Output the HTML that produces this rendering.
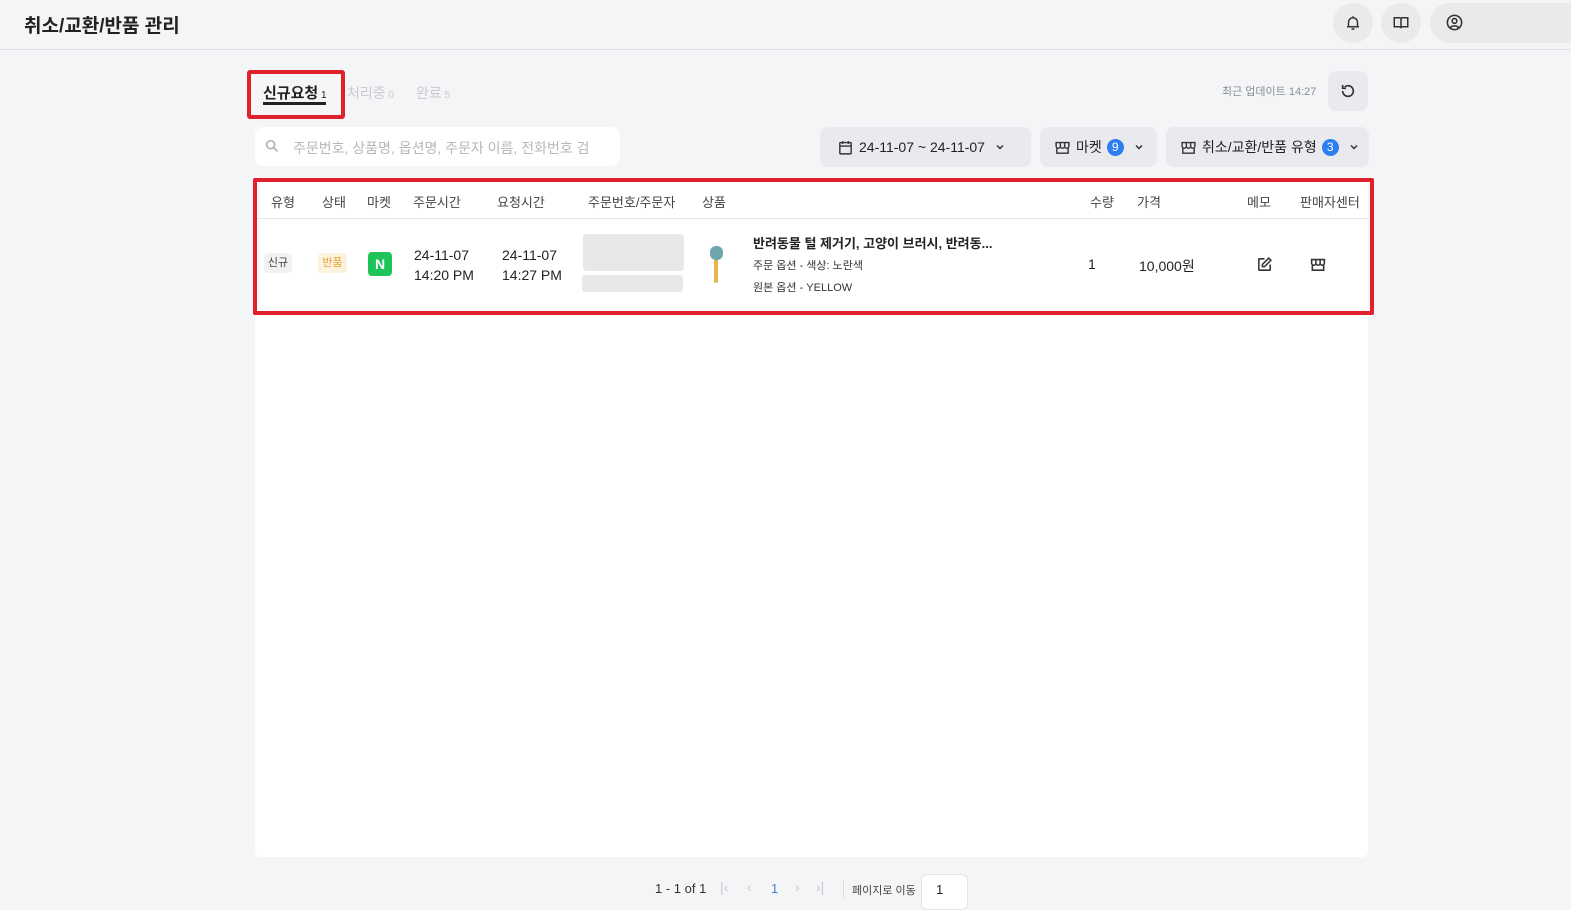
<!DOCTYPE html>
<html><head><meta charset="utf-8"><style>
*{box-sizing:border-box;margin:0;padding:0}
body{width:1571px;height:906px;background:#f4f5f7;font-family:"Liberation Sans","Noto Sans CJK KR",sans-serif;color:#222;position:relative;overflow:hidden}
.a{position:absolute}
.hdr{left:0;top:0;width:1571px;height:50px;border-bottom:1px solid #dfe1e5;background:#f4f5f7}
.circ{width:40px;height:40px;border-radius:20px;background:#e9eaec;display:flex;align-items:center;justify-content:center}
.btn{background:#e9eaed;border-radius:8px;height:40px;display:flex;align-items:center;font-size:14px;color:#222;gap:5px;padding:0 14px;white-space:nowrap}
.btn svg,.btn span{flex-shrink:0}
.badge{width:17px;height:17px;border-radius:9px;background:#2d7ff0;color:#fff;font-size:12px;display:inline-flex;align-items:center;justify-content:center}
.th{top:192px;font-size:13px;color:#444}
.td{font-size:14px;color:#222}
</style></head><body>
<div class="a hdr"></div>
<div class="a" style="left:24px;top:11px;font-size:19px;font-weight:bold;color:#222">취소/교환/반품 관리</div>
<div class="a circ" style="left:1333px;top:3px"><svg width="18" height="18" viewBox="0 0 24 24" fill="none" stroke="#333" stroke-width="2"><path d="M6 17V11a6 6 0 0 1 12 0v6H6zM4 17h16M10 20h4M12 3v2"/></svg></div>
<div class="a circ" style="left:1381px;top:3px"><svg width="20" height="18" viewBox="0 0 24 24" fill="none" stroke="#333" stroke-width="2"><path d="M3 5h7a2 2 0 0 1 2 2v12a2 2 0 0 0-2-2H3zM21 5h-7a2 2 0 0 0-2 2v12a2 2 0 0 1 2-2h7z"/></svg></div>
<div class="a" style="left:1430px;top:3px;width:160px;height:40px;border-radius:20px;background:#e9eaec"></div>
<svg class="a" style="left:1445px;top:13px" width="19" height="19" viewBox="0 0 24 24" fill="none" stroke="#333" stroke-width="2"><circle cx="12" cy="12" r="9"/><circle cx="12" cy="10" r="3"/><path d="M6.5 18.5c3-3 8-3 11 0"/></svg>

<div class="a" style="left:247px;top:70px;width:98px;height:49px;border:4px solid #e0202a;border-radius:3px"></div>
<div class="a" style="left:263px;top:82px;font-size:15px;font-weight:bold;color:#222">신규요청<span style="font-size:10px;font-weight:normal"> 1</span></div>
<div class="a" style="left:263px;top:102px;width:63px;height:3px;background:#222"></div>
<div class="a" style="left:347px;top:83px;font-size:14px;color:#c8cacd">처리중<span style="font-size:10px"> 0</span></div>
<div class="a" style="left:416px;top:83px;font-size:14px;color:#c8cacd">완료<span style="font-size:10px"> 5</span></div>
<div class="a" style="left:1222px;top:83px;font-size:11px;color:#8a8d92">최근 업데이트 14:27</div>
<div class="a" style="left:1328px;top:71px;width:40px;height:40px;border-radius:8px;background:#e9eaed;display:flex;align-items:center;justify-content:center"><svg width="16" height="16" viewBox="0 0 24 24" fill="none" stroke="#333" stroke-width="2.5"><path d="M4 12a8 8 0 1 0 3-6.2M4 3v5h5"/></svg></div>

<div class="a" style="left:255px;top:127px;width:365px;height:39px;background:#fff;border-radius:8px"></div>
<svg class="a" style="left:264px;top:138px" width="16" height="16" viewBox="0 0 24 24" fill="none" stroke="#b0b2b6" stroke-width="2.5"><circle cx="10" cy="10" r="6"/><path d="M15 15l5 5"/></svg>
<div class="a" style="left:293px;top:138px;font-size:14px;color:#b5b7bb;width:310px;overflow:hidden;white-space:nowrap">주문번호, 상품명, 옵션명, 주문자 이름, 전화번호 검</div>

<div class="a btn" style="left:820px;top:127px;width:211px;padding-left:17px"><svg width="17" height="17" viewBox="0 0 24 24" fill="none" stroke="#333" stroke-width="2"><rect x="4" y="5" width="16" height="16" rx="1"/><path d="M4 10h16M8 3v4M16 3v4"/></svg>24-11-07 ~ 24-11-07 <svg width="12" height="12" viewBox="0 0 24 24" fill="none" stroke="#333" stroke-width="3" style="margin-left:4px"><path d="M6 9l6 6 6-6"/></svg></div>
<div class="a btn" style="left:1040px;top:127px;width:117px"><svg width="17" height="17" viewBox="0 0 24 24" fill="none" stroke="#333" stroke-width="2"><path d="M3 5h18v5a3 3 0 0 1-6 0 3 3 0 0 1-6 0 3 3 0 0 1-6 0zM4 12v8h16v-8M9 5v5M15 5v5"/></svg><span>마켓</span><span class="badge">9</span><svg width="12" height="12" viewBox="0 0 24 24" fill="none" stroke="#333" stroke-width="3" style="margin-left:4px"><path d="M6 9l6 6 6-6"/></svg></div>
<div class="a btn" style="left:1166px;top:127px;width:203px"><svg width="17" height="17" viewBox="0 0 24 24" fill="none" stroke="#333" stroke-width="2"><path d="M3 5h18v5a3 3 0 0 1-6 0 3 3 0 0 1-6 0 3 3 0 0 1-6 0zM4 12v8h16v-8M9 5v5M15 5v5"/></svg><span>취소/교환/반품 유형</span><span class="badge">3</span><svg width="12" height="12" viewBox="0 0 24 24" fill="none" stroke="#333" stroke-width="3" style="margin-left:4px"><path d="M6 9l6 6 6-6"/></svg></div>

<div class="a" style="left:255px;top:180px;width:1113px;height:677px;background:#fff;border-radius:6px"></div>
<div class="a" style="left:255px;top:218px;width:1113px;height:1px;background:#e3e5e8"></div>
<div class="a" style="left:253px;top:178px;width:1121px;height:137px;border:4px solid #e0202a;border-radius:2px"></div>

<div class="a th" style="left:271px">유형</div>
<div class="a th" style="left:322px">상태</div>
<div class="a th" style="left:367px">마켓</div>
<div class="a th" style="left:413px">주문시간</div>
<div class="a th" style="left:497px">요청시간</div>
<div class="a th" style="left:588px">주문번호/주문자</div>
<div class="a th" style="left:702px">상품</div>
<div class="a th" style="left:1090px">수량</div>
<div class="a th" style="left:1137px">가격</div>
<div class="a th" style="left:1247px">메모</div>
<div class="a th" style="left:1300px">판매자센터</div>

<div class="a" style="left:264px;top:253px;width:28px;height:20px;background:#f1f2f4;border-radius:4px;font-size:11px;color:#444;text-align:center;line-height:20px">신규</div>
<div class="a" style="left:318px;top:253px;width:29px;height:20px;background:#fdf2dc;border-radius:4px;font-size:11px;color:#e8a23a;text-align:center;line-height:20px">반품</div>
<div class="a" style="left:368px;top:252px;width:24px;height:24px;background:#1ec35a;border-radius:4px;color:#fff;font-weight:bold;font-size:14px;text-align:center;line-height:24px">N</div>
<div class="a td" style="left:414px;top:245px;line-height:20px">24-11-07<br>14:20 PM</div>
<div class="a td" style="left:502px;top:245px;line-height:20px">24-11-07<br>14:27 PM</div>
<div class="a" style="left:583px;top:234px;width:101px;height:37px;background:#e8e8e8;border-radius:3px"></div>
<div class="a" style="left:582px;top:275px;width:101px;height:17px;background:#e8e8e8;border-radius:3px"></div>
<div class="a" style="left:714px;top:256px;width:4px;height:27px;background:#e9b44c;border-radius:2px"></div>
<div class="a" style="left:710px;top:246px;width:13px;height:14px;background:#6fa5ad;border-radius:6px"></div>
<div class="a" style="left:753px;top:233px;font-size:13px;font-weight:bold;color:#222">반려동물 털 제거기, 고양이 브러시, 반려동...</div>
<div class="a" style="left:753px;top:257px;font-size:11px;color:#333">주문 옵션 - 색상: 노란색</div>
<div class="a" style="left:753px;top:279px;font-size:11px;color:#333">원본 옵션 - YELLOW</div>
<div class="a td" style="left:1088px;top:256px">1</div>
<div class="a td" style="left:1139px;top:256px">10,000원</div>
<svg class="a" style="left:1256px;top:256px" width="17" height="17" viewBox="0 0 24 24" fill="none" stroke="#333" stroke-width="2.2"><path d="M12 4H5a1 1 0 0 0-1 1v14a1 1 0 0 0 1 1h14a1 1 0 0 0 1-1v-7M18 3l3 3-9 9H9v-3z"/></svg>
<svg class="a" style="left:1309px;top:256px" width="18" height="17" viewBox="0 0 24 24" fill="none" stroke="#333" stroke-width="2.2"><path d="M3 5h18v5a3 3 0 0 1-6 0 3 3 0 0 1-6 0 3 3 0 0 1-6 0zM4 12v8h16v-8M9 5v5M15 5v5"/></svg>

<div class="a" style="left:655px;top:881px;font-size:13px;color:#333">1 - 1 of 1</div>
<div class="a" style="left:720px;top:879px;font-size:14px;color:#c5c7cb">|‹</div>
<div class="a" style="left:747px;top:879px;font-size:14px;color:#c5c7cb">‹</div>
<div class="a" style="left:771px;top:881px;font-size:13px;color:#4a7fd0">1</div>
<div class="a" style="left:795px;top:879px;font-size:14px;color:#c5c7cb">›</div>
<div class="a" style="left:816px;top:879px;font-size:14px;color:#c5c7cb">›|</div>
<div class="a" style="left:843px;top:880px;width:1px;height:18px;background:#ddd"></div>
<div class="a" style="left:852px;top:882px;font-size:11px;color:#444">페이지로 이동</div>
<div class="a" style="left:921px;top:874px;width:47px;height:36px;background:#fff;border:1px solid #e3e5e8;border-radius:6px;font-size:13px;padding:7px 0 0 14px">1</div>
</body></html>
